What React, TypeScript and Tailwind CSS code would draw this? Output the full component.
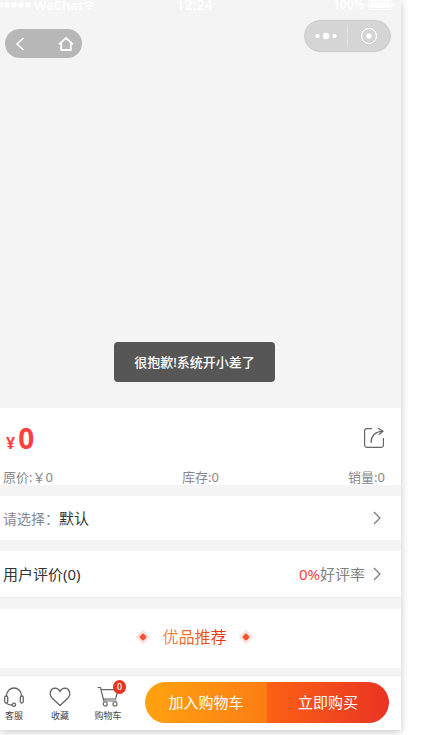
import React from "react";

function Chevron() {
  return (
    <svg width="8" height="14" viewBox="0 0 8 14" fill="none" stroke="#777" strokeWidth="1.2" aria-hidden="true">
      <path d="M1 1l6 6-6 6" />
    </svg>
  );
}

function Diamond() {
  return (
    <svg width="16" height="16" viewBox="0 0 16 16" aria-hidden="true">
      <path d="M8 0.5l7.5 7.5L8 15.5 0.5 8z" fill="#fde3df" />
      <circle cx="8" cy="8" r="2.6" fill="#f4512c" />
      <path d="M8 4.300l3.700 3.700L8 11.700 4.300 8z" fill="#f4512c" />
    </svg>
  );
}

function StatusBar() {
  return (
    <div className="grid h-[13px] grid-cols-3 grid-rows-[13px] items-end text-white">
      <div className="flex h-4 items-center">
        <svg width="32" height="8" viewBox="0 0 32 8" fill="#fff" aria-hidden="true">
          <circle cx="0" cy="4" r="2.8" />
          <circle cx="7" cy="4" r="2.8" />
          <circle cx="14" cy="4" r="2.8" />
          <circle cx="21" cy="4" r="2.8" />
          <circle cx="28" cy="4" r="2.8" />
        </svg>
        <span className="ml-0.5 text-[13px] leading-4 font-semibold">WeChat</span>
        <svg width="12" height="9" viewBox="0 0 12 9" fill="none" stroke="#fff" strokeWidth="1.6" aria-hidden="true">
          <path d="M0.8 3.4C3.6 0.4 8.4 0.4 11.2 3.4M2.8 5.6c1.8-1.8 4.6-1.8 6.4 0" />
          <circle cx="6" cy="7.6" r="0.6" />
        </svg>
      </div>
      <div className="text-center text-sm leading-4 font-medium">
        <span className="mr-3">12:24</span>
      </div>
      <div className="flex h-4 items-center justify-end gap-1 pr-1.5">
        <span className="text-xs leading-4 font-semibold">100%</span>
        <svg width="27" height="10" viewBox="0 0 27 10" aria-hidden="true">
          <rect x="0.5" y="0.5" width="23" height="9" rx="2" fill="none" stroke="#fff" />
          <rect x="2" y="2" width="20" height="6" rx="1" fill="#fff" />
          <path d="M25 3.2c1.6 0.4 1.6 3.2 0 3.6z" fill="#fff" />
        </svg>
      </div>
    </div>
  );
}

function NavBar() {
  return (
    <div className="mt-[7px] flex items-start justify-between pr-2.5 pl-[5px]">
      <div className="mt-[9px] flex h-[29px] w-[77px] items-center justify-between rounded-full bg-[#b7b7b7] pr-2 pl-2.5">
        <button type="button" aria-label="返回">
          <svg className="block" width="10" height="16" viewBox="0 0 10 16" fill="none" stroke="#fff" strokeWidth="1.6">
            <path d="M8.500 2L2 8l6.500 6" />
          </svg>
        </button>
        <button type="button" aria-label="首页">
          <svg className="block" width="16" height="16" viewBox="0 0 16 16" fill="none" stroke="#fff" strokeWidth="1.800">
            <path d="M1 8.300L8 2l7 6.300M3.200 7v7h9.600V7" />
          </svg>
        </button>
      </div>
      <div className="flex h-8 w-[87px] items-center rounded-full border border-[#cbcbcb] bg-[#d5d5d5]">
        <button type="button" aria-label="更多" className="flex flex-1 justify-center">
          <svg width="22" height="10" viewBox="0 0 22 10" fill="#fff" stroke="#bbb" strokeWidth="0.4">
            <circle cx="2.500" cy="5" r="2.500" />
            <circle cx="11" cy="5" r="3.700" />
            <circle cx="19.500" cy="5" r="2.500" />
          </svg>
        </button>
        <span className="h-[18px] w-px bg-[#e2e2e2]" />
        <button type="button" aria-label="关闭" className="flex flex-1 justify-center">
          <svg width="18" height="18" viewBox="0 0 18 18">
            <circle cx="9" cy="9" r="7.500" fill="none" stroke="#c0c0c0" strokeWidth="2.600" />
            <circle cx="9" cy="9" r="7.500" fill="none" stroke="#fff" strokeWidth="1.600" />
            <circle cx="9" cy="9" r="3" fill="#fff" stroke="#c0c0c0" strokeWidth="0.400" />
          </svg>
        </button>
      </div>
    </div>
  );
}

function PriceCard() {
  return (
    <section className="bg-white pr-4 pl-[3px]">
      <div className="flex h-[60px] items-center justify-between">
        <p className="flex items-baseline gap-[3px] pl-[3px] font-bold text-[#fc3f3f]">
          <span className="text-base">¥</span>
          <span className="text-[28px] leading-9">0</span>
        </p>
        <button type="button" aria-label="分享">
          <svg className="block" width="22" height="22" viewBox="0 0 22 22" fill="none" stroke="#666" strokeWidth="1.200">
            <path d="M9 1.600H4a2.400 2.400 0 0 0-2.400 2.400v14a2.400 2.400 0 0 0 2.400 2.400h14a2.400 2.400 0 0 0 2.400-2.400v-7" />
            <path d="M8 16C8 9 11.500 5 19.500 4.200M15 1.200l5 3-4.200 3.500" />
          </svg>
        </button>
      </div>
      <div className="flex h-[17px] items-center justify-between text-[13px] leading-4 text-[#87878f]">
        <span>原价:￥0</span>
        <span>库存:0</span>
        <span>销量:0</span>
      </div>
    </section>
  );
}

function BottomBar() {
  const tab = "flex w-9 flex-col items-center gap-0.5 pt-1 text-[9px] leading-3 text-[#444]";
  return (
    <footer className="flex h-[55px] items-start border-t border-[#ececec] bg-white pt-1.5 pr-3">
      <div className="-ml-1 flex gap-[10px]">
        <button type="button" className={tab}>
          <svg width="22" height="22" viewBox="0 0 22 22" fill="none" stroke="#666" strokeWidth="1.300" aria-hidden="true">
            <path d="M3.500 10V9.500a7.500 7.500 0 0 1 15 0V10" />
            <rect x="1.700" y="10" width="3" height="7" rx="1.500" />
            <rect x="17.300" y="10" width="3" height="7" rx="1.500" />
            <path d="M3.500 17c1 1.500 3 2 6 2" />
            <circle cx="11" cy="18.800" r="1.600" />
          </svg>
          客服
        </button>
        <button type="button" className={tab}>
          <svg width="22" height="22" viewBox="0 0 22 22" fill="none" stroke="#666" strokeWidth="1.300" aria-hidden="true">
            <path d="M11 19.500L3 12C-0.500 8 1.500 2.500 6 2.200c2.200 0 4 1.300 5 3.300 1-2 2.800-3.300 5-3.300C20.500 2.500 22.500 8 19 12z" />
          </svg>
          收藏
        </button>
        <button type="button" className={`relative ml-0.5 ${tab}`}>
          <svg width="22" height="22" viewBox="0 0 22 22" fill="none" stroke="#666" strokeWidth="1.200" aria-hidden="true">
            <path d="M0.500 1.500h3l3.300 13.500h13M4.200 3.600H21l-2.400 9.200L6.200 13.200" />
            <circle cx="8.200" cy="18" r="2" />
            <circle cx="18" cy="18" r="2" />
          </svg>
          购物车
          <span className="absolute -top-0.5 right-0 flex h-3.5 w-[13px] items-center justify-center rounded-full bg-[#e93424] text-[9px] font-medium text-white">
            0
          </span>
        </button>
      </div>
      <div className="ml-[19px] flex h-[41px] flex-1 overflow-hidden rounded-full text-[15px] text-white">
        <button type="button" className="flex-1 bg-linear-to-r from-[#ffa20f] to-[#fb7d14]">加入购物车</button>
        <button type="button" className="flex-1 bg-linear-to-r from-[#fb6013] to-[#e93323]">立即购买</button>
      </div>
    </footer>
  );
}

export default function App() {
  return (
    <div className="overflow-hidden bg-white pr-[21px] pb-[5px] font-['Noto_Sans','Noto_Sans_CJK_SC',sans-serif]">
      <main className="bg-[#f4f4f4] shadow-[0_2px_8px_rgba(0,0,0,0.22)]">
        <header className="flex h-[408px] flex-col">
          <StatusBar />
          <NavBar />
          <div role="alert" className="mt-auto mr-3 mb-[26px] self-center rounded bg-[#565656] px-5 py-2.5 text-[13px] leading-5 font-medium text-white">
            很抱歉!系统开小差了
          </div>
        </header>
        <PriceCard />
        <button type="button" className="mt-[11px] flex h-11 w-full items-center justify-between bg-white pr-5 pl-[3px] text-[15px] text-[#333]">
          <span>
            <span className="text-sm text-[#87878f]">请选择：</span>默认
          </span>
          <Chevron />
        </button>
        <button type="button" className="mt-[11px] flex h-[47px] w-full items-center justify-between border-b border-[#e9e9e9] bg-white pr-5 pl-[3px] text-[15px] text-[#333]">
          <span>用户评价(0)</span>
          <span className="flex items-center gap-2 text-[#808080]">
            <span>
              <span className="text-[#fc4141]">0%</span>好评率
            </span>
            <Chevron />
          </span>
        </button>
        <section className="mt-[11px] mb-[7px] flex h-[59px] items-center justify-center gap-[11px] bg-white pr-3 pb-1">
          <Diamond />
          <h2 className="bg-linear-to-r from-[#fb8a3c] to-[#e9200f] bg-clip-text text-base text-transparent">优品推荐</h2>
          <Diamond />
        </section>
        <BottomBar />
      </main>
    </div>
  );
}
